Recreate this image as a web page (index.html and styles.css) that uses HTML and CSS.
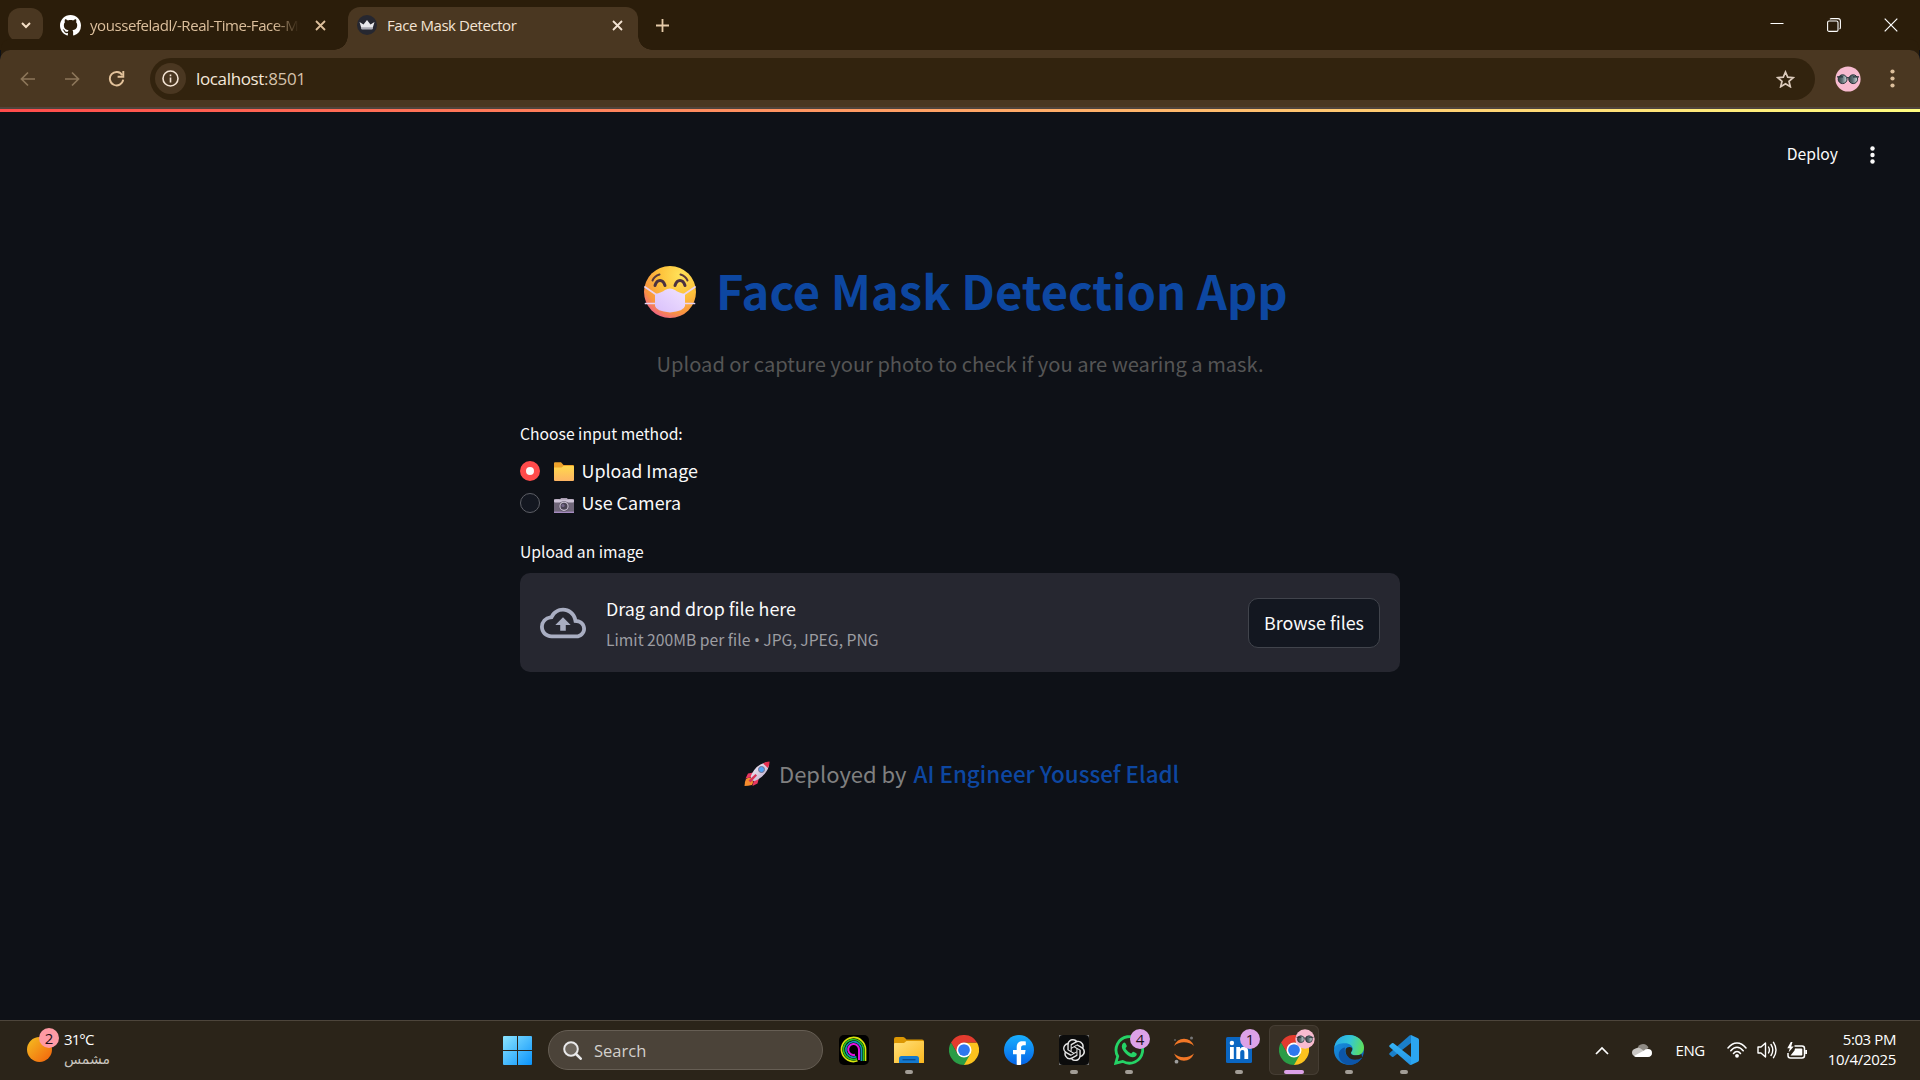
FILE: index.html
```html
<!DOCTYPE html>
<html lang="en">
<head>
<meta charset="utf-8">
<title>Face Mask Detector</title>
<link rel="stylesheet" href="styles.css">
</head>
<body>
<svg class="defs" width="0" height="0" aria-hidden="true">
  <defs>
    <linearGradient id="lens" x1="0" x2="1" y1="0" y2="0"><stop offset="0" stop-color="#3a4447"/><stop offset=".45" stop-color="#5f7075"/><stop offset="1" stop-color="#d5dde0"/></linearGradient>
    <radialGradient id="skin" cx=".7" cy=".18" r=".9"><stop offset="0" stop-color="#ffe35a"/><stop offset=".45" stop-color="#fdc13a"/><stop offset=".8" stop-color="#f8943f"/><stop offset="1" stop-color="#ef5e8a"/></radialGradient>
    <linearGradient id="maskfill" x1="1" x2="0" y1="0" y2="1"><stop offset="0" stop-color="#f0e2ff"/><stop offset="1" stop-color="#d9c0fb"/></linearGradient>
    <linearGradient id="folder" x1="0" x2="0" y1="0" y2="1"><stop offset="0" stop-color="#ffd84d"/><stop offset="1" stop-color="#fdb463"/></linearGradient>
    <linearGradient id="sun" x1="0" x2="1" y1="0" y2="1"><stop offset="0" stop-color="#f5c021"/><stop offset="1" stop-color="#f2600c"/></linearGradient>
    <linearGradient id="win" x1="0" x2="1" y1="0" y2="1"><stop offset="0" stop-color="#8be4ff"/><stop offset="1" stop-color="#0a93fb"/></linearGradient>
    <linearGradient id="fexp" x1="0" x2="1" y1="0" y2="1"><stop offset="0" stop-color="#ffe07a"/><stop offset="1" stop-color="#fcb81f"/></linearGradient>
    <linearGradient id="fb" x1="0" x2="0" y1="0" y2="1"><stop offset="0" stop-color="#19affe"/><stop offset="1" stop-color="#0464e8"/></linearGradient>
    <linearGradient id="edge1" x1="0" x2="1" y1=".3" y2=".5"><stop offset="0" stop-color="#2aa9e8"/><stop offset=".5" stop-color="#33c6d8"/><stop offset="1" stop-color="#5ee05a"/></linearGradient>
    <linearGradient id="edge2" x1="0" x2="1" y1="0" y2="1"><stop offset="0" stop-color="#1795e6"/><stop offset="1" stop-color="#0f5db0"/></linearGradient>
    <linearGradient id="code" x1="0" x2="0" y1="0" y2="1"><stop offset="0" stop-color="#35b4f7"/><stop offset="1" stop-color="#2391e0"/></linearGradient>
    <linearGradient id="rocket" x1="0" x2="1" y1="0" y2="1"><stop offset="0" stop-color="#f6f0fa"/><stop offset="1" stop-color="#b9a9c8"/></linearGradient>
    <symbol id="shades" viewBox="0 0 26 26">
      <circle cx="13" cy="13" r="12.6" fill="#f8bbd0"/>
      <circle cx="7.6" cy="13.2" r="4.4" fill="url(#lens)" stroke="#273238"/>
      <circle cx="18.2" cy="13.2" r="4.4" fill="url(#lens)" stroke="#273238"/>
      <path d="M2 10.8h6M18 10.8h6M11.6 12q1.3-1 2.6 0" stroke="#273238" stroke-width="1.2" fill="none"/>
    </symbol>
    <symbol id="chrome" viewBox="0 0 48 48">
      <path d="M24 24 44.8 12A24 24 0 0 1 24 48z" fill="#fcc31e"/>
      <path d="M24 12h20.8L34.4 30z" fill="#fcc31e"/>
      <path d="M24 12H44.8A24 24 0 0 0 3.2 12L13.6 30z" fill="#e33b2e"/>
      <path d="M34.4 30 24 48A24 24 0 0 1 3.2 12L13.6 30z" fill="#2a9c46"/>
      <circle cx="24" cy="24" r="12" fill="#fff"/><circle cx="24" cy="24" r="9.4" fill="#2f78ee"/>
    </symbol>
  </defs>
</svg>

<header class="tabs">
  <div class="tab-search"><svg width="10" height="7" viewBox="0 0 10 7"><path d="M1 1l4 4 4-4" fill="none" stroke="#f5dfc6" stroke-width="2"/></svg></div>
  <div class="tab tab-idle">
    <svg width="21" height="21" viewBox="0 0 16 16"><path fill="#fff" d="M8 0C3.58 0 0 3.58 0 8c0 3.54 2.29 6.53 5.47 7.59.4.07.55-.17.55-.38 0-.19-.01-.82-.01-1.49-2.01.37-2.53-.49-2.69-.94-.09-.23-.48-.94-.82-1.13-.28-.15-.68-.52-.01-.53.63-.01 1.08.58 1.23.82.72 1.21 1.87.87 2.33.66.07-.52.28-.87.51-1.07-1.78-.2-3.64-.89-3.64-3.95 0-.87.31-1.59.82-2.15-.08-.2-.36-1.02.08-2.12 0 0 .67-.21 2.2.82.64-.18 1.32-.27 2-.27s1.36.09 2 .27c1.53-1.04 2.2-.82 2.2-.82.44 1.1.16 1.92.08 2.12.51.56.82 1.27.82 2.15 0 3.07-1.87 3.75-3.65 3.95.29.25.54.73.54 1.48 0 1.07-.01 1.93-.01 2.2 0 .21.15.46.55.38A8.01 8.01 0 0 0 16 8c0-4.42-3.58-8-8-8z"/></svg>
    <span class="tab-title">youssefeladl/-Real-Time-Face-M</span>
    <svg class="x" width="11" height="11" viewBox="0 0 11 11"><path d="M1 1l9 9M10 1l-9 9" stroke="#dcbf9c" stroke-width="1.8"/></svg>
  </div>
  <div class="tab tab-active">
    <svg width="20" height="20" viewBox="0 0 20 20"><circle cx="10" cy="10" r="10" fill="#262730"/><path d="M2.5 7l4 2.6L10 5l3.5 4.6 4-2.6-2.2 7.2H4.7z" fill="#e8e8ec"/><path d="M4 12.2h12l-.7 2H4.7z" fill="#a9a9b2"/></svg>
    <span class="tab-title">Face Mask Detector</span>
    <svg class="x" width="11" height="11" viewBox="0 0 11 11"><path d="M1 1l9 9M10 1l-9 9" stroke="#f3e3d3" stroke-width="1.8"/></svg>
  </div>
  <svg class="plus" width="13" height="13" viewBox="0 0 13 13"><path d="M6.5 0v13M0 6.5h13" stroke="#e6cba9" stroke-width="1.8"/></svg>
  <div class="window-buttons">
    <svg width="14" height="14" viewBox="0 0 14 14"><path d="M.5 5.5h13" stroke="#fff"/></svg>
    <svg width="14" height="14" viewBox="0 0 14 14"><rect x=".6" y="3" width="10.4" height="10.4" rx="1.5" fill="none" stroke="#fff" stroke-width="1.1"/><path d="M3 1.2Q3.4.6 4.6.6H11Q13.4.6 13.4 3v6.6q0 1-.8 1.4" fill="none" stroke="#fff" stroke-width="1.1"/></svg>
    <svg width="14" height="14" viewBox="0 0 14 14"><path d="M.7.7l12.6 12.6M13.3.7.7 13.3" stroke="#fff" stroke-width="1.2"/></svg>
  </div>
</header>

<nav class="toolbar">
  <svg width="16" height="16" viewBox="0 0 16 16"><path d="M15 8H1.5M8 1.5 1.5 8 8 14.5" fill="none" stroke="#8c7659" stroke-width="1.7"/></svg>
  <svg width="16" height="16" viewBox="0 0 16 16"><path d="M1 8h13.5M8 1.5 14.5 8 8 14.5" fill="none" stroke="#8c7659" stroke-width="1.7"/></svg>
  <svg width="17" height="17" viewBox="0 0 17 17"><path d="M14.3 5.2A6.7 6.7 0 1 0 15.2 9.7" fill="none" stroke="#e3c29b" stroke-width="1.9"/><path d="M15.3 1v5.7H9.6" fill="none" stroke="#e3c29b" stroke-width="1.9"/></svg>
  <div class="omnibox">
    <span class="site-info"><svg width="17" height="17" viewBox="0 0 17 17"><circle cx="8.5" cy="8.5" r="7.5" fill="none" stroke="#f3e3d3" stroke-width="1.6"/><path d="M8.5 7.5V12.5M8.5 4.5v1.7" stroke="#f3e3d3" stroke-width="1.6"/></svg></span>
    <span class="url">localhost<span class="port">:8501</span></span>
    <svg class="star" width="19" height="18" viewBox="0 0 19 18"><path d="M9.5 2l2.2 5.1 5.5.5-4.2 3.7 1.3 5.4-4.8-2.9-4.8 2.9 1.3-5.4L1.8 7.6l5.5-.5z" fill="none" stroke="#dbcabb" stroke-width="1.7"/></svg>
  </div>
  <svg class="avatar" width="26" height="26"><use href="#shades"/></svg>
  <svg width="5" height="19" viewBox="0 0 5 19"><g fill="#dcbf9c"><circle cx="2.5" cy="2.5" r="2.1"/><circle cx="2.5" cy="9.5" r="2.1"/><circle cx="2.5" cy="16.5" r="2.1"/></g></svg>
</nav>
<div class="decoration"></div>

<main class="app">
  <div class="app-header">
    <span class="deploy">Deploy</span>
    <svg width="5" height="18" viewBox="0 0 5 18"><g fill="#fafafa"><circle cx="2.5" cy="2.5" r="2.2"/><circle cx="2.5" cy="9" r="2.2"/><circle cx="2.5" cy="15.5" r="2.2"/></g></svg>
  </div>
  <div class="column">
    <h1 class="title">
      <svg width="52" height="52" viewBox="0 0 52 52">
        <circle cx="26" cy="26" r="26" fill="url(#skin)"/>
        <g fill="none" stroke-linecap="round">
          <path d="M8.5 14.500q2-4.5 7-6M43.5 14.500q-2-4.5-7-6" stroke="#5b3a3c" stroke-width="2"/>
          <path d="M11 19.500q1.500-5 5-5t5 5M31 19.500q1.500-5 5-5t5 5" stroke="#4b3140" stroke-width="3"/>
          <path d="M1 21l11 7.500M51 21l-11 7.500M1.500 37.500H12M50.500 37.500H40" stroke="#e9d3f2" stroke-width="1.7"/>
        </g>
        <path d="M11 28q7-1.500 10-4 5-3 10 0 3 2.500 10 4v12q-1 5-15 6.500Q12 45 11 40z" fill="url(#maskfill)"/>
      </svg>
      <span class="title-text">Face Mask Detection App</span>
    </h1>
    <p class="subtitle">Upload or capture your photo to check if you are wearing a mask.</p>
    <div class="label">Choose input method:</div>
    <div class="option">
      <span class="radio radio-on"></span>
      <svg width="20" height="19" viewBox="0 0 20 19"><path d="M0 1.200Q0 .2 1 .2h6L9.500 3H19q1 0 1 1v6H0z" fill="#eda22b"/><path d="M0 5.500h7.500L9.500 4H19q1 0 1 1v13q0 1-1 1H1q-1 0-1-1z" fill="url(#folder)"/></svg>
      <span class="option-text">Upload Image</span>
    </div>
    <div class="option">
      <span class="radio"></span>
      <svg class="camera" width="20" height="15" viewBox="0 0 20 15"><path d="M2 1h3v1H2zM6 1.500 7 0h6l1 1.500zM15 1h3v1h-3z" fill="#a79bb0"/><rect y="1.3" width="20" height="13.7" rx="1" fill="#6f6679"/><rect y="1.3" width="20" height="3.2" rx="1" fill="#cfc4d8"/><rect y="13.6" width="20" height="1.4" fill="#a58bc0"/><circle cx="10" cy="8.3" r="5.2" fill="#5a5164"/><circle cx="10" cy="8.3" r="4.1" fill="#4a4354" stroke="#c9c0d2" stroke-width="1.2"/><circle cx="9" cy="7.5" r="1.6" fill="#75688a"/></svg>
      <span class="option-text">Use Camera</span>
    </div>
    <div class="label label-upload">Upload an image</div>
    <section class="dropzone">
      <svg width="46" height="46" viewBox="0 0 24 24"><path fill="#a9aec2" d="M19.35 10.04A7.49 7.49 0 0012 4C9.11 4 6.6 5.64 5.35 8.04A5.994 5.994 0 000 14c0 3.31 2.69 6 6 6h13c2.76 0 5-2.24 5-5 0-2.64-2.05-4.78-4.65-4.96zM19 18H6c-2.21 0-4-1.79-4-4 0-2.05 1.53-3.76 3.56-3.97l1.07-.11.5-.95A5.469 5.469 0 0112 6c2.62 0 4.88 1.86 5.39 4.43l.3 1.5 1.53.11A2.98 2.98 0 0122 15c0 1.65-1.35 3-3 3zM8 13h2.55v3h2.9v-3H16l-4-4z"/></svg>
      <div class="drop-text">
        <span class="drop-main">Drag and drop file here</span>
        <span class="drop-limit">Limit 200MB per file <span class="bullet">•</span> JPG, JPEG, PNG</span>
      </div>
      <button class="browse">Browse files</button>
    </section>
    <p class="credit">
      <svg width="26" height="26" viewBox="0 0 26 26"><path d="M2 18q4-3 6 0t0 6q-4 1-7.500 1Q.5 21 2 18z" fill="#f58b2e"/><path d="M9.500 11.500 4 12.500 1.500 17.500 8 16zM15 17l-1.500 5.500L8.500 25 10 18.500z" fill="#e8375f"/><path d="M8 19Q5.500 17 8 12.500 13 3 22 1.500l3 3Q23 13 14 18.500q-4 2.500-6 .5z" fill="url(#rocket)"/><path d="M19 2.500Q22 .5 25.500.5q.3 3.500-1.700 6.500z" fill="#e5304f"/><path d="M11.500 13l1.500 1.500-6.500 7-2-2z" fill="#d83358"/><circle cx="17.500" cy="8.500" r="3" fill="#4fa3f3" stroke="#77708c"/></svg>
      <span class="by">Deployed by</span>
      <span class="author">AI Engineer Youssef Eladl</span>
    </p>
  </div>
</main>

<footer class="taskbar">
  <div class="weather">
    <div class="sun"><svg width="25" height="25"><circle cx="12.5" cy="12.5" r="12.5" fill="url(#sun)"/></svg><span class="badge badge-red">2</span></div>
    <div class="weather-text"><span class="temp">31°C</span><span class="arabic" lang="ar" dir="rtl">مشمس</span></div>
  </div>
  <div class="dock">
    <div class="cell"><svg width="29" height="29" viewBox="0 0 29 29"><path d="M1 0h13v14H0V1q0-1 1-1zM15 0h13q1 0 1 1v13H15zM0 15h14v14H1q-1 0-1-1zM15 15h14v13q0 1-1 1H15z" fill="url(#win)"/></svg></div>
    <div class="search"><svg width="19" height="19" viewBox="0 0 19 19"><circle cx="8" cy="8" r="6.8" fill="#6d665d" stroke="#e9e9ea" stroke-width="2"/><path d="M13 13l4.700 4.700" stroke="#e9e9ea" stroke-width="2.6" stroke-linecap="round"/></svg><span>Search</span></div>
    <div class="cell"><svg width="30" height="30" viewBox="0 0 30 30"><rect width="30" height="30" rx="5" fill="#000"/><g fill="none" stroke-width="1.7"><path d="M26.500 26V14.500a12 12 0 1 0-8 11.300" stroke="#d7e60c"/><path d="M24.500 26V14.500a10 10 0 1 0-6.500 9.400" stroke="#27c322"/><path d="M22.400 26V14.500a7.800 7.800 0 1 0-5 7.300" stroke="#1592b8"/><path d="M20 25V14.500a5.400 5.400 0 1 0-4 5.200" stroke="#e214e0" stroke-width="2"/></g></svg></div>
    <div class="cell running"><svg width="30" height="30" viewBox="0 0 30 30"><path d="M0 4q0-2 2-2h7q1 0 2 1l1.500 1.500H28q2 0 2 2V12H0z" fill="#dc9703"/><path d="M0 9q0-1 1-1h9l2.500-2H29q1 0 1 1v20.500q0 .5-.5.5H.5q-.5 0-.5-.5z" fill="url(#fexp)"/><path d="M5 28v-4.500q0-2.500 2.500-2.500h15q2.500 0 2.500 2.500V28z" fill="#1379cf"/><path d="M8.500 24.700h13" stroke="#0a4a8c" stroke-width="1.3"/></svg></div>
    <div class="cell"><svg width="30" height="30"><use href="#chrome"/></svg></div>
    <div class="cell"><svg width="30" height="30" viewBox="0 0 30 30"><circle cx="15" cy="15" r="15" fill="url(#fb)"/><path d="M12.700 29.800V19.300H9v-4.200h3.700v-2.700c0-4.200 2.200-6.100 5.800-6.100 1.200 0 2.300.1 3.300.3v3.700h-2.200c-2 0-2.500 1-2.500 2.300v2.500h4.500l-.7 4.200h-3.800v10.500q-2.200.4-4.400 0z" fill="#fff"/></svg></div>
    <div class="cell running"><svg width="30" height="30" viewBox="0 0 30 30"><rect width="30" height="30" fill="#777"/><rect width="30" height="30" rx="4" fill="#0c0c0c"/><g transform="translate(4 4) scale(.92)"><path fill="#e4e4e4" d="M22.2819 9.8211a5.9847 5.9847 0 0 0-.5157-4.9108 6.0462 6.0462 0 0 0-6.5098-2.9A6.0651 6.0651 0 0 0 4.9807 4.1818a5.9847 5.9847 0 0 0-3.9977 2.9 6.0462 6.0462 0 0 0 .7427 7.0966 5.98 5.98 0 0 0 .511 4.9107 6.051 6.051 0 0 0 6.5146 2.9001A5.9847 5.9847 0 0 0 13.2599 24a6.0557 6.0557 0 0 0 5.7718-4.2058 5.9894 5.9894 0 0 0 3.9977-2.9001 6.0557 6.0557 0 0 0-.7475-7.0729zm-9.022 12.6081a4.4755 4.4755 0 0 1-2.8764-1.0408l.1419-.0804 4.7783-2.7582a.7948.7948 0 0 0 .3927-.6813v-6.7369l2.02 1.1686a.071.071 0 0 1 .038.052v5.5826a4.504 4.504 0 0 1-4.4945 4.4944zm-9.6607-4.1254a4.4708 4.4708 0 0 1-.5346-3.0137l.142.0852 4.783 2.7582a.7712.7712 0 0 0 .7806 0l5.8428-3.3685v2.3324a.0804.0804 0 0 1-.0332.0615L9.74 19.9502a4.4992 4.4992 0 0 1-6.1408-1.6464zM2.3408 7.8956a4.485 4.485 0 0 1 2.3655-1.9728V11.6a.7664.7664 0 0 0 .3879.6765l5.8144 3.3543-2.0201 1.1685a.0757.0757 0 0 1-.071 0l-4.8303-2.7865A4.504 4.504 0 0 1 2.3408 7.872zm16.5963 3.8558L13.1038 8.364 15.1192 7.2a.0757.0757 0 0 1 .071 0l4.8303 2.7913a4.4944 4.4944 0 0 1-.6765 8.1042v-5.6772a.79.79 0 0 0-.407-.667zm2.0107-3.0231l-.142-.0852-4.7735-2.7818a.7759.7759 0 0 0-.7854 0L9.409 9.2297V6.8974a.0662.0662 0 0 1 .0284-.0615l4.8303-2.7866a4.4992 4.4992 0 0 1 6.6802 4.66zM8.3065 12.863l-2.02-1.1638a.0804.0804 0 0 1-.038-.0567V6.0742a4.4992 4.4992 0 0 1 7.3757-3.4537l-.142.0805L8.704 5.459a.7948.7948 0 0 0-.3927.6813zm1.0976-2.3654l2.602-1.4998 2.6069 1.4998v2.9994l-2.5974 1.4997-2.6067-1.4997Z"/></g></svg></div>
    <div class="cell running"><svg width="30" height="30" viewBox="0 0 30 30"><path d="M1.800 28.200 3.700 21.300A13.300 13.300 0 1 1 8.700 26.400z" fill="none" stroke="#25d366" stroke-width="2.8"/><path d="M10.400 7.600c-.7 0-2.600 1.500-2.600 4 0 4.500 6.700 10.700 11 10.700 2.400 0 4-1.500 4-3.300 0-.8-3.200-2.300-3.700-2.300-.7 0-1.300 1.800-2 1.800-1 0-5.500-3.700-5.500-5.200 0-.7 1.200-1.200 1.200-2 0-.6-1.200-3.700-2.400-3.700z" fill="#25d366"/></svg><span class="badge badge-violet">4</span></div>
    <div class="cell"><svg width="30" height="30" viewBox="0 0 30 30"><path d="M5 11Q8 3.800 15 3.800T25 11Q21 7.300 15 7.300T5 11zM5 18.500Q8 25.700 15 25.700T25 18.500Q21 22.200 15 22.200T5 18.500z" fill="#f37726"/><circle cx="22.500" cy="3" r="1.5" fill="#767677"/><circle cx="6" cy="5" r="1" fill="#616262"/><circle cx="7.500" cy="26.700" r="1.9" fill="#9e9e9e"/></svg></div>
    <div class="cell running"><svg width="26" height="26" viewBox="0 0 26 26"><rect width="26" height="26" rx="1.5" fill="#0a66c2"/><path d="M4 10h3.800v12H4zM10.300 10H14v1.700q1.200-2 3.800-2c3.700 0 4.400 2.400 4.400 5.600V22h-3.800v-6c0-1.500 0-3.100-1.900-3.100s-2.300 1.500-2.300 3V22h-3.900z" fill="#fff"/><circle cx="5.900" cy="6" r="2.2" fill="#fff"/></svg><span class="badge badge-violet">1</span></div>
    <div class="cell running current"><svg width="30" height="30"><use href="#chrome"/></svg><svg class="badge-face" width="20" height="20" viewBox="0 0 26 26"><use href="#shades" width="26" height="26"/></svg></div>
    <div class="cell running"><svg width="30" height="30" viewBox="0 0 30 30"><circle cx="15" cy="15" r="15" fill="url(#edge2)"/><path d="M.3 13C1 5 7 0 15 0c8.500 0 15 6 15 12.500 0 5-3.500 7.800-7.500 7.800-3 0-5.500-1-5.500-2.600 0-1 1.700-1.600 1.700-4 0-3-3-5.500-7.700-5.500C6 8.200 1.500 9.500.3 13z" fill="url(#edge1)"/><path d="M11 12.500c-1.500 6 3.500 12 10 12 3 0 5-1 6.500-1.800.4-.2.700.2.400.6C25.500 27 21 30 15.500 30 8 29 3.500 23.500 5 17.500c.7-2.700 3.300-4.500 6-5z" fill="#0c55a8"/><path d="M17 17.700q-.5 2.600 5.500 2.600 3 0 5-1.300l.7 3.500q-3 2.200-7.200 2.200c-5.500 0-10.500-5-9.300-10.500 1-2.200 4-2.800 6.300-1.500.8 2.800-.7 3.500-1 5z" fill="#2b2419"/></svg></div>
    <div class="cell running"><svg width="30" height="30" viewBox="0 0 30 30"><path d="M22 0l7 3.300q1 .5 1 1.600v20.200q0 1.100-1 1.600L22 30z" fill="#2ba5f0"/><path d="M22 0v8L4.500 21.700q-.8.6-1.600 0L.6 19.700q-.8-.8 0-1.600L20.500.5Q21.200 0 22 0z" fill="#1a7fc9"/><path d="M22 30v-8L4.500 8.300q-.8-.6-1.600 0L.6 10.300q-.8.8 0 1.600L20.500 29.500q.7.500 1.500.5z" fill="url(#code)"/></svg></div>
  </div>
  <div class="tray">
    <svg width="14" height="9" viewBox="0 0 14 9"><path d="M1 8l6-6 6 6" fill="none" stroke="#fff" stroke-width="1.7"/></svg>
    <svg class="cloud" width="20" height="13" viewBox="0 0 20 13"><path d="M5 6Q6 0 11 0q4 0 5.500 4l-8 5z" fill="#8f8b85"/><path d="M3.500 4.500Q7 2.500 10 5.500l5 4-11 3Q0 12 0 8.500q0-3 3.500-4z" fill="#c9c7c4"/><path d="M4 13h12q4-.3 4-4 0-3.700-4-3.900-2.500-.1-4 1.400L2 12q1 1 2 1z" fill="#fff"/></svg>
    <span class="lang">ENG</span>
    <svg class="wifi" width="20" height="16" viewBox="0 0 20 16"><g fill="none" stroke="#fff" stroke-width="1.5" stroke-linecap="round"><path d="M1 6Q5 1 10 1t9 5M3.800 8.800Q6.500 5.300 10 5.300t6.200 3.500M6.500 11.500Q8 9.500 10 9.500t3.500 2"/></g><circle cx="10" cy="13.800" r="1.9" fill="#fff"/></svg>
    <svg class="volume" width="20" height="18" viewBox="0 0 20 18"><g fill="none" stroke="#fff" stroke-width="1.4" stroke-linejoin="round" stroke-linecap="round"><path d="M1 6h3l4.500-4v14L4 12H1zM11.500 6q1.800 3 0 6M14 3.500q3.600 5.500 0 11M16.500 1.300q5 7.700 0 15.400"/></g></svg>
    <svg class="battery" width="20" height="17" viewBox="0 0 20 17"><path d="M7.500 4H15q2.500 0 2.500 2.500v7Q17.500 16 15 16H3.500Q1 16 1 13.500V11" fill="none" stroke="#fff" stroke-width="1.5"/><path d="M8 6.500h6.500q.8 0 .8.800v5.400q0 .8-.8.800h-11l4-5z" fill="#fff"/><path d="M18.200 8h1.800v4h-1.800zM3.800 0 .3 6.200h2.500L1.500 10.500 6.700 4.500H4.200L5.500 0z" fill="#fff"/></svg>
    <div class="clock"><span>5:03 PM</span><span class="date">10/4/2025</span></div>
  </div>
</footer>
</body>
</html>
```
FILE: styles.css
```css
* { box-sizing: border-box; }

body {
  margin: 0;
  width: 1920px;
  height: 1080px;
  overflow: hidden;
  display: flex;
  flex-direction: column;
  background: #0e1117;
  font-family: "Open Sans", "Noto Sans", sans-serif;
}

svg { display: block; flex: none; }
.defs { position: absolute; }
p, h1 { margin: 0; }

/* Tab strip */
.tabs {
  height: 50px;
  flex: none;
  display: flex;
  align-items: center;
  padding-left: 8px;
  background: #2b1d0a;
}
.tab-search {
  width: 35px;
  height: 34px;
  border-radius: 12px;
  background: #4a3721;
  display: grid;
  place-items: center;
}
.tab {
  display: flex;
  align-items: center;
  font-size: 15px;
  letter-spacing: -.43px;
  white-space: nowrap;
}
.tab-idle { width: 305px; padding-left: 17px; color: #dcbf9c; }
.tab-idle .tab-title {
  width: 209px;
  margin: 0 16px 0 9px;
  -webkit-mask-image: linear-gradient(90deg, #000 88%, transparent);
  mask-image: linear-gradient(90deg, #000 88%, transparent);
}
.tab-active {
  position: relative;
  width: 290px;
  height: 43px;
  margin-top: 7px;
  padding: 0 15px 7px 9px;
  border-radius: 12px 12px 0 0;
  background: #4a3721;
  color: #f3e3d3;
}
.tab-active::before,
.tab-active::after {
  content: "";
  position: absolute;
  bottom: 0;
  width: 14px;
  height: 14px;
}
.tab-active::before { left: -14px; background: radial-gradient(circle at 0 0, transparent 13.5px, #4a3721 14px); }
.tab-active::after { right: -14px; background: radial-gradient(circle at 100% 0, transparent 13.5px, #4a3721 14px); }
.tab-active .tab-title { margin-left: 10px; }
.tab-active .x { margin-left: auto; }
.plus { margin-left: 18px; }
.window-buttons { display: flex; gap: 43px; margin-left: auto; padding-right: 22px; }

/* Address bar */
.toolbar {
  height: 59px;
  flex: none;
  display: flex;
  align-items: center;
  padding: 0 25px 2px 20px;
  background: linear-gradient(#4a3721 57px, #50443c 57px);
  border-radius: 10px 10px 0 0;
  box-shadow: 0 -12px 0 -1px #2b1d0a;
}
.toolbar > svg + svg { margin-left: 28px; }
.toolbar > .avatar + svg { margin-left: 29px; }
.omnibox {
  flex: 1;
  height: 42px;
  margin: 0 20px 0 25px;
  padding: 0 20px 0 5px;
  border-radius: 21px;
  background: #32230e;
  display: flex;
  align-items: center;
}
.site-info {
  width: 31px;
  height: 31px;
  border-radius: 50%;
  background: #4a3721;
  display: grid;
  place-items: center;
}
.url { margin-left: 10px; font-size: 17px; letter-spacing: -.35px; color: #f5e8da; }
.port { color: #d5c2ab; }
.star { margin-left: auto; }
.decoration { height: 3px; flex: none; background: linear-gradient(90deg, #ff4b4b, #fffd80); }

/* Streamlit app */
.app {
  flex: 1;
  font-family: "Noto Sans CJK SC", sans-serif;
  color: #fafafa;
}
.app-header {
  height: 85px;
  display: flex;
  align-items: center;
  justify-content: flex-end;
  padding-right: 45px;
  gap: 32px;
}
.deploy { padding-bottom: 2px; font-size: 15.7px; line-height: 24px; }
.column { width: 880px; margin: 0 auto; padding-top: 62px; }
.title {
  display: flex;
  align-items: center;
  gap: 20px;
  height: 66px;
  padding-left: 124px;
  font-size: 47.1px;
  line-height: 60px;
  font-weight: 700;
  color: #0d47a1;
  white-space: nowrap;
}
.title-text { padding-bottom: 5px; }
.subtitle {
  margin-top: 22px;
  text-align: center;
  font-size: 20.12px;
  line-height: 34px;
  color: #555;
}
.label { margin-top: 38px; font-size: 15.7px; line-height: 30px; }
.option {
  display: flex;
  align-items: center;
  height: 32px;
  font-size: 17.9px;
}
.label + .option { margin-top: 6px; }
.radio {
  width: 20px;
  height: 20px;
  margin-right: 14px;
  border: 1px solid #5d5f66;
  border-radius: 50%;
  background: #131720;
}
.radio-on { border: 6px solid #ff4b4b; background: #fafafa; }
.option-text { margin-left: 7.5px; padding-bottom: 2px; }
.camera { margin-top: 5px; }
.label-upload { margin-top: 18px; }
.dropzone {
  height: 99px;
  margin-top: 6px;
  padding: 0 20px;
  border-radius: 10px;
  background: #262730;
  display: flex;
  align-items: center;
}
.drop-text { display: flex; flex-direction: column; margin-left: 20px; padding-top: 1px; }
.drop-main { font-size: 17.9px; line-height: 32px; }
.drop-limit { font-size: 15.7px; line-height: 31px; color: #9c9da2; }
.bullet { font-family: "Open Sans", sans-serif; line-height: 1; }
.browse {
  width: 132px;
  height: 50px;
  margin-left: auto;
  padding: 0 0 2px;
  border: 1px solid #41444c;
  border-radius: 10px;
  background: #131720;
  color: #fafafa;
  font: 17.9px/32px "Noto Sans CJK SC", sans-serif;
}
.credit {
  display: flex;
  align-items: center;
  height: 34px;
  margin-top: 85px;
  padding-left: 224px;
  font-size: 22px;
  line-height: 32px;
  color: #808080;
}
.by { margin-left: 9px; padding-bottom: 2px; }
.author { margin-left: 7px; padding-bottom: 2px; font-size: 22.4px; font-weight: 500; color: #0d47a1; }

/* Taskbar */
.taskbar {
  height: 60px;
  flex: none;
  display: grid;
  grid-template-columns: 492px 1fr auto;
  padding-bottom: 1px;
  border-top: 1px solid #4d453b;
  background: #2b2419;
  color: #fff;
}
.weather { display: flex; align-items: center; padding-left: 27px; }
.sun { position: relative; margin-top: -2px; }
.sun .badge { left: 12px; top: -9px; }
.weather-text { display: flex; flex-direction: column; margin-left: 12px; padding-bottom: 2px; font-size: 15px; line-height: 20px; }
.temp { letter-spacing: -.9px; }
.arabic { font: 14px/20px "DejaVu Sans", sans-serif; color: #c9c5bf; }
.dock { display: flex; align-items: center; gap: 5px; }
.cell {
  position: relative;
  width: 50px;
  height: 50px;
  border-radius: 6px;
  display: grid;
  place-items: center;
}
.running::after {
  content: "";
  position: absolute;
  left: 21px;
  bottom: 1px;
  width: 8px;
  height: 4px;
  border-radius: 2px;
  background: #a29d96;
}
.current { background: #383025; box-shadow: inset 0 0 0 1px #453d33; }
.current::after { left: 15px; width: 20px; background: #dca2e8; }
.search {
  width: 275px;
  height: 40px;
  margin: 0 1px;
  padding-left: 14px;
  border: 1px solid #665e54;
  border-radius: 20px;
  background: #4b4339;
  display: flex;
  align-items: center;
  gap: 12px;
  font-size: 16.5px;
  color: #d3d0cc;
}
.badge {
  position: absolute;
  left: 26px;
  top: 4px;
  width: 20px;
  height: 20px;
  border-radius: 50%;
  text-align: center;
  font-size: 15px;
  line-height: 20px;
  color: #1c1018;
}
.badge-red { background: #ff9aa4; }
.badge-violet { background: #dca2e8; }
.badge-face { position: absolute; left: 26px; top: 4px; }
.tray { display: flex; align-items: center; padding-right: 24px; }
.cloud { margin-left: 23px; }
.lang { margin-left: 24px; font-size: 15px; letter-spacing: -.5px; }
.wifi { margin-left: 22px; }
.volume { margin-left: 10px; }
.battery { margin-left: 10px; }
.clock { display: flex; flex-direction: column; align-items: flex-end; margin-left: 21px; padding-bottom: 2px; font-size: 15px; line-height: 20px; letter-spacing: -.4px; }
.date { letter-spacing: -.3px; }
```
